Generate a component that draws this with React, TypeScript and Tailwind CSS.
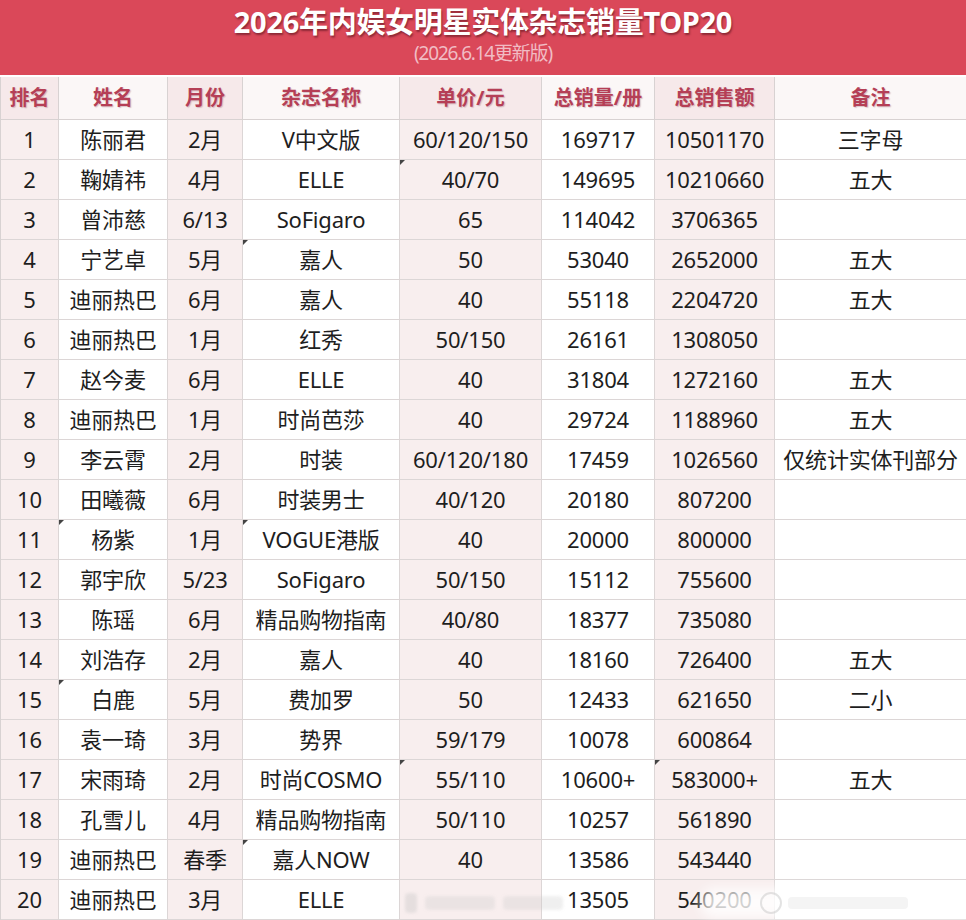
import React from "react";

const cols = ["排名", "姓名", "月份", "杂志名称", "单价/元", "总销量/册", "总销售额", "备注"];

const rows: string[][] = [
  ["1", "陈丽君", "2月", "V中文版", "60/120/150", "169717", "10501170", "三字母"],
  ["2", "鞠婧祎", "4月", "ELLE", "40/70", "149695", "10210660", "五大"],
  ["3", "曾沛慈", "6/13", "SoFigaro", "65", "114042", "3706365", ""],
  ["4", "宁艺卓", "5月", "嘉人", "50", "53040", "2652000", "五大"],
  ["5", "迪丽热巴", "6月", "嘉人", "40", "55118", "2204720", "五大"],
  ["6", "迪丽热巴", "1月", "红秀", "50/150", "26161", "1308050", ""],
  ["7", "赵今麦", "6月", "ELLE", "40", "31804", "1272160", "五大"],
  ["8", "迪丽热巴", "1月", "时尚芭莎", "40", "29724", "1188960", "五大"],
  ["9", "李云霄", "2月", "时装", "60/120/180", "17459", "1026560", "仅统计实体刊部分"],
  ["10", "田曦薇", "6月", "时装男士", "40/120", "20180", "807200", ""],
  ["11", "杨紫", "1月", "VOGUE港版", "40", "20000", "800000", ""],
  ["12", "郭宇欣", "5/23", "SoFigaro", "50/150", "15112", "755600", ""],
  ["13", "陈瑶", "6月", "精品购物指南", "40/80", "18377", "735080", ""],
  ["14", "刘浩存", "2月", "嘉人", "40", "18160", "726400", "五大"],
  ["15", "白鹿", "5月", "费加罗", "50", "12433", "621650", "二小"],
  ["16", "袁一琦", "3月", "势界", "59/179", "10078", "600864", ""],
  ["17", "宋雨琦", "2月", "时尚COSMO", "55/110", "10600+", "583000+", "五大"],
  ["18", "孔雪儿", "4月", "精品购物指南", "50/110", "10257", "561890", ""],
  ["19", "迪丽热巴", "春季", "嘉人NOW", "40", "13586", "543440", ""],
  ["20", "迪丽热巴", "3月", "ELLE", "", "13505", "540200", ""],
];

// excel comment markers (row index, col index)
const markers = new Set(["1-4", "3-3", "10-1", "10-3", "14-1", "16-4", "16-6", "18-3"]);

const shaded = [true, false, true, false, true, false, true, false];

export default function App() {
  return (
    <div
      className="relative w-[966px] h-[920px] overflow-hidden bg-white"
      style={{ fontFamily: '"Noto Sans", "Noto Sans CJK SC", sans-serif' }}
    >
      <div className="h-[77px] bg-[#da4859] flex flex-col items-center pt-[3px] border-b-2 border-white">
        <h1
          className="text-[29px] leading-[38px] font-bold text-white tracking-[-0.3px]"
          style={{ textShadow: "1px 2px 2px rgba(90,20,30,0.6)" }}
        >
          2026年内娱女明星实体杂志销量TOP20
        </h1>
        <div className="text-[19px] leading-[24px] text-[#f1bcc4] tracking-[-1.2px]">(2026.6.14更新版)</div>
      </div>

      <div className="grid grid-cols-[58px_109px_75px_157px_142px_113px_120px_192px] border-l border-[#d8d2d2]">
        {cols.map((c, i) => (
          <div
            key={c}
            className={`h-[43px] flex items-center justify-center border-r border-b border-[#d8d2d2] text-[20px] font-bold text-[#b53f56] ${
              shaded[i] ? "bg-[#f6e9ea]" : "bg-[#fbf7f7]"
            }`}
            style={{ textShadow: "1px 1px 1px rgba(120,40,60,0.25)" }}
          >
            {c}
          </div>
        ))}
        {rows.map((r, ri) =>
          r.map((v, ci) => (
            <div
              key={ri + "-" + ci}
              className={`relative h-[40px] flex items-center justify-center border-r border-b border-[#dcd6d6] text-[22px] text-[#1e1e1e] whitespace-nowrap tracking-[-0.2px] ${
                shaded[ci] ? "bg-[#f8eeee]" : "bg-white"
              }`}
            >
              {markers.has(ri + "-" + ci) && (
                <span className="absolute left-0 top-0 w-0 h-0 border-t-[5px] border-r-[5px] border-t-[#444] border-r-transparent" />
              )}
              {v}
            </div>
          ))
        )}
      </div>

      {/* watermark */}
      <div className="absolute left-[700px] top-[888px] w-[280px] h-[30px] bg-white/80 blur-[6px] rounded-full" />
      <div className="absolute left-[405px] top-[892px] w-[240px] h-[22px] flex items-center gap-[8px] opacity-30 blur-[1.5px]">
        <span className="w-[12px] h-[20px] rounded bg-[#bbb]" />
        <span className="w-[70px] h-[14px] rounded bg-[#ccc]" />
        <span className="w-[60px] h-[14px] rounded bg-[#ccc]" />
      </div>
      <div className="absolute left-[760px] top-[893px] w-[200px] h-[20px] flex items-center gap-[6px] opacity-40">
        <span className="w-[22px] h-[22px] rounded-full border-2 border-[#bbb]" />
        <span className="w-[120px] h-[12px] rounded bg-[#e4e4e4]" />
      </div>
    </div>
  );
}
